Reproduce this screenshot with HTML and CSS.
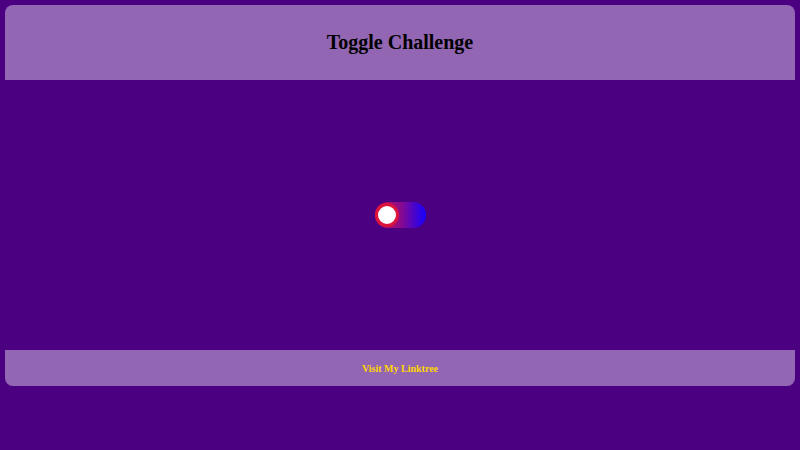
FILE: index.html
```html
<!DOCTYPE html>
<html>
<head>
<meta charset="utf-8">
<link rel="stylesheet" href="styles.css">
</head>
<body>
<header class="top">
  <h2 class="title">Toggle Challenge</h2>
</header>
<main class="stage">
  <label class="switch">
    <span class="knob"></span>
  </label>
</main>
<footer class="bottom">
  <a class="link" href="#">Visit My Linktree</a>
</footer>
</body>
</html>
```
FILE: styles.css
```css
html, body {
  margin: 0;
  padding: 0;
}
body {
  background: #4b0082;
  font-family: "Liberation Serif", "Times New Roman", serif;
  padding: 5px;
  height: 450px;
  box-sizing: border-box;
}
.top {
  background: #9366b4;
  height: 75px;
  border-radius: 8px 8px 0 0;
  display: flex;
  align-items: center;
  justify-content: center;
}
.title {
  margin: 0;
  font-size: 20px;
  font-weight: bold;
  color: #000;
}
.stage {
  height: 270px;
  display: flex;
  align-items: center;
  justify-content: center;
}
.switch {
  width: 51px;
  height: 26px;
  border-radius: 13px;
  background: linear-gradient(to right, #dc143c 0%, #8a0a8c 50%, #1400ff 100%);
  display: flex;
  align-items: center;
  padding-left: 0;
  box-sizing: border-box;
}
.knob {
  width: 18px;
  height: 18px;
  border-radius: 50%;
  background: #fff;
  border: 3px solid #dc143c;
}
.bottom {
  background: #9366b4;
  height: 36px;
  border-radius: 0 0 8px 8px;
  display: flex;
  align-items: center;
  justify-content: center;
}
.link {
  color: #ffd700;
  font-weight: bold;
  font-size: 10px;
  text-decoration: none;
}
```
